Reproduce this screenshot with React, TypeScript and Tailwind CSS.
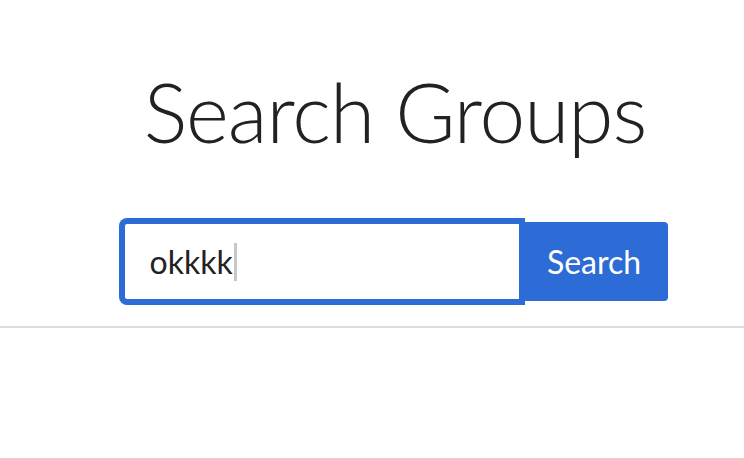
export default function App() {
  return (
    <div className="min-h-screen bg-white font-['Lato',sans-serif] text-[#222]">
      <div className="flex flex-col items-center pl-[46px] pt-[70px]">
        <h1 className="text-[82px] font-light leading-none tracking-[-1px]">Search Groups</h1>
        <form className="mt-[70px] flex" onSubmit={(e) => e.preventDefault()}>
          <div className="flex h-[79px] w-[398px] items-center rounded-l-[4px] border-2 border-[#2d6bd6] bg-white pl-[25px] ring-4 ring-[#2d6bd6]">
            <span className="text-[32px] leading-none">okkkk</span>
            <span className="ml-[1px] h-[38px] w-[3px] bg-[#c8c8c8]" />
          </div>
          <button
            type="submit"
            className="h-[79px] w-[147px] rounded-r-[4px] bg-[#2d6bd6] text-[32px] text-white"
          >
            Search
          </button>
        </form>
      </div>
      <div className="mt-[25px] h-[2px] w-full bg-[#dddddd]" />
    </div>
  );
}
